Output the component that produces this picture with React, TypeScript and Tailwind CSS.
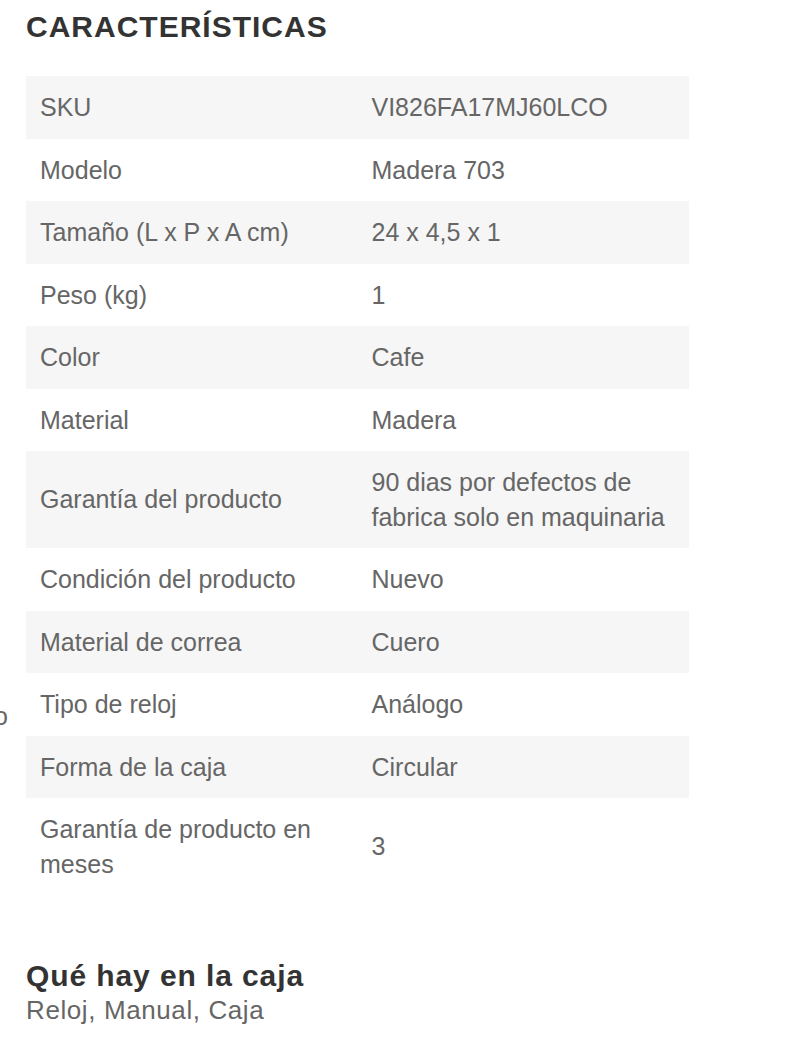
const rows: { label: string; value: string }[] = [
  { label: 'SKU', value: 'VI826FA17MJ60LCO' },
  { label: 'Modelo', value: 'Madera 703' },
  { label: 'Tamaño (L x P x A cm)', value: '24 x 4,5 x 1' },
  { label: 'Peso (kg)', value: '1' },
  { label: 'Color', value: 'Cafe' },
  { label: 'Material', value: 'Madera' },
  { label: 'Garantía del producto', value: '90 dias por defectos de fabrica solo en maquinaria' },
  { label: 'Condición del producto', value: 'Nuevo' },
  { label: 'Material de correa', value: 'Cuero' },
  { label: 'Tipo de reloj', value: 'Análogo' },
  { label: 'Forma de la caja', value: 'Circular' },
  { label: 'Garantía de producto en meses', value: '3' },
]

export default function App() {
  return (
    <div className="relative w-[800px] h-[1063px] overflow-hidden bg-white font-['Liberation_Sans',Arial,sans-serif]">
      {/* clipped fragment from the neighbouring column */}
      <span className="absolute left-[-6px] top-[699px] text-[25px] leading-[34px] text-[#666]">o</span>

      <div className="pl-[26px] pt-[10px]">
        <h2 className="text-[30px] leading-[34px] font-bold uppercase tracking-[1px] text-[#333]">Características</h2>

        <table className="mt-[32px] w-[663px] table-fixed border-collapse text-[25px] leading-[34.5px] text-[#666]">
          <tbody>
            {rows.map((r, i) => (
              <tr key={r.label} className={i % 2 === 0 ? 'bg-[#f6f6f6]' : 'bg-white'}>
                <td className="w-1/2 py-[14px] px-[14px] align-middle">{r.label}</td>
                <td className="w-1/2 py-[14px] px-[14px] align-middle">{r.value}</td>
              </tr>
            ))}
          </tbody>
        </table>

        <h3 className="mt-[64px] text-[30px] leading-[34px] font-bold tracking-[0.9px] text-[#333]">Qué hay en la caja</h3>
        <p className="text-[26px] leading-[34px] tracking-[0.6px] text-[#666]">Reloj, Manual, Caja</p>
      </div>
    </div>
  )
}
